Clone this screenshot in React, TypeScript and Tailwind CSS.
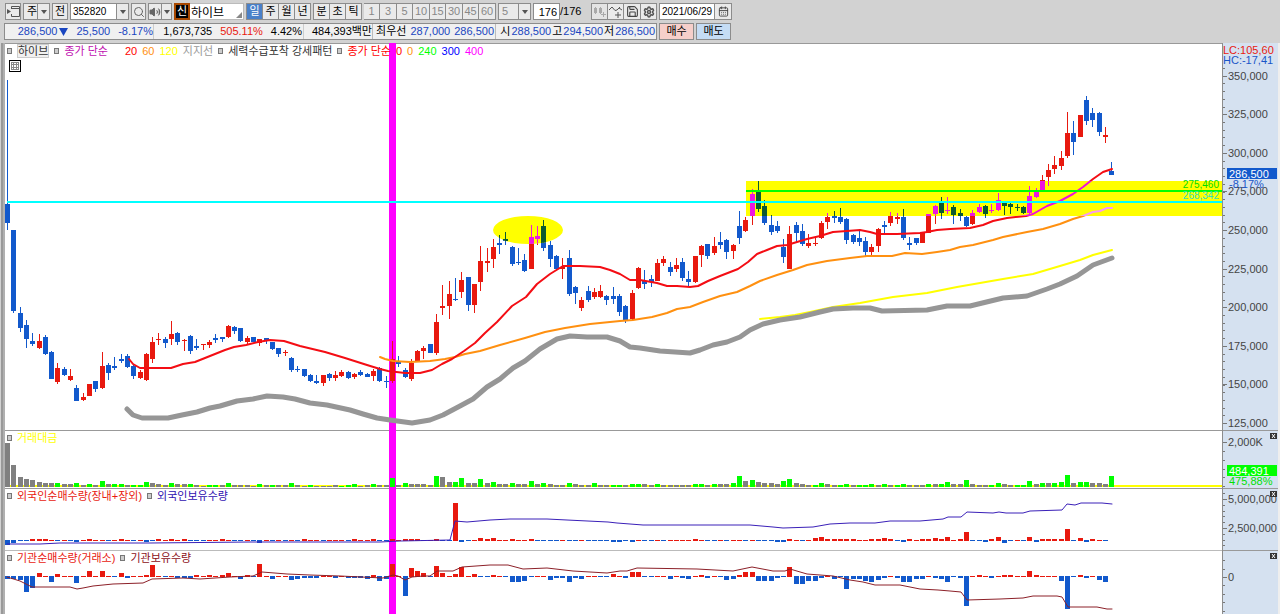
import React from 'react';
import { Search, Settings, Save, CalendarDays, Volume2 } from 'lucide-react';

const FIRST_X = 7.5;
const STEP = 6.31;

const barX = (i: number) => Math.floor(FIRST_X + STEP * i);

// high, body top, body bottom, low, r = rising / b = falling
const CANDLES = `80 204 223 230 b|230 230 311 313 b|307 313 328 332 b|320 325 339 348 b|333 341 344 346 b|334 341 348 349 r
335 337 354 355 b|351 352 379 379 b|363 368 382 384 r|367 369 375 376 b|369 376 380 381 r|385 388 401 401 b
393 397 400 401 r|384 384 396 396 r|381 381 389 392 b|352 366 388 389 r|363 365 373 380 b|357 366 368 370 b
354 359 361 363 b|354 356 367 368 b|365 366 376 379 b|370 372 378 379 r|353 354 380 381 r|337 342 359 363 r
333 339 340 345 r|337 339 343 348 b|321 334 339 345 r|332 333 342 345 b|339 340 341 351 r|335 336 351 354 b
339 346 348 350 b|344 344 345 350 r|340 342 345 348 r|334 338 340 343 b|337 337 339 342 b|325 326 337 338 r
326 327 331 334 b|328 328 341 342 b|336 338 342 345 r|337 337 342 342 b|339 339 343 346 r|338 338 341 344 b
342 342 349 350 b|348 348 354 357 b|350 352 353 356 r|357 358 370 372 b|366 369 370 372 b|369 369 376 377 b
374 375 381 382 b|375 381 383 384 b|375 375 383 386 r|373 374 378 381 b|371 375 378 381 r|370 372 376 377 r
371 372 378 379 b|373 374 377 379 r|370 372 375 376 b|373 374 377 377 b|369 371 376 381 r|367 368 381 382 b
376 381 382 388 b|341 359 381 383 r|356 362 364 367 b|368 370 377 378 b|359 363 379 381 r|350 351 361 362 r
346 348 351 359 r|344 344 353 353 b|314 322 353 355 r|285 306 308 315 r|281 294 306 319 r|278 299 300 301 b
272 280 292 298 r|277 277 305 311 b|284 284 305 313 r|246 261 282 291 r|248 261 263 272 r|239 247 259 268 r
235 243 245 254 b|232 239 241 245 b|246 247 264 266 b|248 262 263 265 b|254 260 271 272 b|225 237 269 269 r
226 236 239 245 r|220 226 248 251 b|241 245 259 267 b|255 256 269 270 b|258 267 269 279 r|250 258 294 296 b
286 287 293 304 b|297 300 308 311 r|286 291 300 302 b|288 292 297 299 r|285 291 297 298 r|295 296 300 305 b
287 296 299 304 b|294 296 312 316 b|305 306 321 323 b|290 293 319 321 r|267 268 288 289 r|270 281 284 289 b
275 279 282 287 b|259 263 281 281 r|256 259 263 266 r|262 267 272 276 b|258 265 269 272 r|258 262 278 281 b
271 279 282 287 b|256 256 282 283 r|245 246 255 267 r|244 244 256 259 b|237 246 253 255 r|232 242 245 249 b
239 240 252 259 b|244 245 251 259 r|211 226 238 244 b|217 220 231 232 r|189 194 216 225 r|181 192 209 212 b
200 206 223 225 b|215 225 232 235 b|221 226 231 233 b|239 247 257 263 b|226 234 269 269 r|222 225 233 242 b
224 231 244 246 b|234 243 246 248 r|236 243 244 246 r|221 223 238 239 r|213 217 222 229 r|211 216 218 223 b
208 217 222 224 b|218 219 240 244 b|234 235 242 244 b|230 238 242 246 b|237 241 252 256 b|244 247 252 255 r
228 229 246 252 r|221 225 227 233 b|212 216 223 226 r|213 217 219 224 r|209 217 238 240 b|237 243 245 250 b
238 238 243 245 b|233 233 243 243 r|214 214 233 233 r|205 206 214 224 r|197 203 213 219 b|197 210 211 214 r
205 207 215 224 b|209 213 216 221 b|216 217 226 227 b|210 213 224 225 r|204 207 212 213 r|205 206 214 218 b
204 210 211 213 r|193 200 210 211 r|203 203 206 215 b|203 204 207 214 b|204 207 208 211 b|206 207 213 214 b
186 196 213 215 r|188 191 197 198 r|175 180 191 191 r|164 170 177 186 r|156 165 169 174 r|151 158 166 170 r
112 133 156 158 r|121 133 142 155 b|115 115 137 137 r|96 100 121 125 b|108 113 120 127 b|112 113 132 136 b
127 135 137 143 r|162 171 175 175 b`
  .split(/[|\n]/)
  .map(row => {
    const [high, top, bottom, low, dir] = row.trim().split(' ');
    return { high: +high, top: +top, bottom: +bottom, low: +low, up: dir === 'r' };
  });

const MA20 =
  '129,359 133,364 140,368 171,368 183,364 195,362 205,358 215,354 225,350 234,347 246,345 258,342 270,340 284,341 300,346 325,352 345,358 367,365 380,369 388,371 405,373 420,373 432,370 442,364 452,359 464,351 475,343 485,333 497,322 512,306 526,297 537,284 550,274 563,266 580,266 600,267 610,270 620,274 630,280 640,280 657,283 667,286 677,286 690,287 698,286 708,281 720,276 738,269 748,262 757,254 767,250 777,246 787,245 797,242 807,239 820,236 833,232 847,231 860,230 870,232 877,234 897,234 920,233 927,232 937,230 950,229 970,228 983,225 993,221 1007,218 1026,216 1033,214 1047,206 1060,201 1073,194 1083,187 1093,179 1103,172 1112,169';
const MA60 =
  '380,357 385,359 393,361 410,362 430,361 445,359 455,357 465,354 480,351 500,345 525,338 545,332 565,328 590,324 620,321 633,320 652,317 667,313 677,309 690,307 703,302 720,296 737,292 750,286 760,281 777,275 793,270 807,265 827,261 850,258 867,256 892,256 905,253 922,254 937,252 950,250 960,247 973,245 993,240 1003,237 1027,232 1043,229 1060,224 1073,219 1083,216 1093,212 1100,211 1107,208 1112,208';
const MA120 =
  '760,319 780,317 795,315 810,312 833,307 860,303 893,297 927,293 957,287 1003,279 1033,274 1060,266 1080,260 1093,255 1112,250';
const SUPPORT =
  '127,409 133,415 142,418 168,418 182,415 197,412 210,408 220,406 237,401 253,399 267,396 283,397 295,399 310,403 327,405 350,410 363,414 377,418 390,420 412,423 430,420 443,415 460,406 473,399 487,387 500,379 513,368 525,361 540,349 557,339 570,336 587,337 607,337 620,341 630,347 640,348 660,351 690,353 700,350 713,345 727,342 740,337 750,330 763,324 780,320 800,317 820,312 833,309 853,308 870,308 882,311 927,310 947,306 970,306 1003,298 1027,296 1047,289 1060,284 1077,276 1093,265 1112,258';
const FOREIGN_HOLD =
  '7,544 40,544 60,543 150,543 250,542 380,542 400,541 450,540 455,521 467,522 490,520 510,519 547,519 567,520 608,522 617,523 643,525 750,525 773,527 783,528 813,527 830,524 850,523 875,523 890,521 920,521 943,519 948,517 961,517 967,512 993,513 999,512 1006,513 1023,513 1030,511 1062,510 1067,504 1075,505 1081,503 1102,503 1112,504';
const INST_HOLD =
  '7,577 20,581 32,587 70,587 77,589 83,588 93,586 113,584 143,583 152,579 183,578 200,579 230,577 253,576 262,572 287,574 310,575 340,576 383,578 393,575 398,576 405,580 412,577 423,576 430,576 437,571 453,571 462,567 490,565 508,565 523,569 547,568 573,571 607,573 620,571 627,571 637,568 697,569 733,571 752,567 773,571 785,571 790,569 807,574 833,576 850,580 863,582 875,585 900,585 920,589 938,590 950,591 961,592 967,600 1000,599 1023,598 1033,596 1057,596 1062,597 1068,607 1097,607 1107,609 1112,609';

// trailing g = bar drawn green
const VOLUME =
  '44 22 10 8 7 5 4 4 4g 3 3 4g 2 3g 2 6g 3 3g 3g 2 2g 2g 5g 4 3 2 4g 3 3 3g 2 1 2g 2g 2 4g 2 2 2 1 3g 2 2g 2 2 4g 2 1 2g 1 1 1 2 1g 2g 3g 1 2 3g 2 2 9g 2 4g 3 3 3 2 11g 10 5 5g 9g 4 4 8g 4 5g 3 3 4g 3 3 6g 3 4g 3 2 2 4g 3 2 2 4g 2 2 2g 2g 2 3g 3g 3 2 3g 2 2 2 2 2 3g 3g 2 3g 3 3 4g 11g 6 7g 5 4 4 3 6g 8g 4 3 2 2g 4g 3 2 2g 3g 2 2g 2g 3g 2 3g 2 2g 3g 2 2 2 3g 3 3g 5g 3 3 7g 3 2 2 2g 4g 3 2 2g 2g 6g 3 4g 4 4g 5g 12g 4 5g 5g 4 4 3 11g'.split(
    ' '
  );

const FOREIGN =
  '-5 -3 -1 -1 2 2 2 1 -1 1 -1 -2 1 2 1 1 -1 1 2 1 -1 1 -2 -1 2 1 2 1 2 -1 -1 -1 1 1 2 1 -1 -1 1 -1 -3 1 -1 1 -1 1 -1 2 1 1 -1 1 1 1 -1 2 1 1 2 -1 -1 2 1 2 2 2 -1 1 2 -1 -1 38 -2 -1 1 3 2 3 1 1 2 1 1 2 -1 -1 -1 -1 1 -1 -1 1 -1 -1 -1 -1 -2 -2 -1 -2 1 -1 -1 1 -1 1 1 1 1 2 1 -1 -1 1 -1 1 1 -1 1 -1 -1 -1 -2 -2 2 1 -1 1 3 4 2 2 2 2 2 1 1 2 2 3 2 -1 -2 2 1 2 2 3 2 4 1 2 9 -1 -1 -2 2 4 -3 -1 1 -1 4 -2 2 2 2 2 12 -1 3 -2 2 1 -1 0'
    .split(' ')
    .map(Number);

const INSTITUTION =
  '-3 -3 -4 -16 -12 4 1 -6 3 1 1 -7 1 6 1 6 1 -1 4 -2 1 1 2 12 1 -1 1 -2 -2 -2 2 1 2 1 2 4 1 -3 2 -1 13 1 -3 1 1 -4 -3 -2 -2 -2 1 1 -2 1 -2 -2 -2 -3 2 -5 -3 13 1 -20 9 6 4 -1 11 4 1 3 10 1 3 -1 -1 2 1 -1 -6 -6 -5 -1 1 1 -4 -2 -2 -6 -2 -3 1 1 -1 -1 3 1 -2 5 5 -1 -1 1 1 -3 1 -2 -3 1 2 -2 1 -1 -4 -3 2 5 5 -5 -5 -5 -2 -1 10 -8 -8 -5 -5 -2 1 -3 -1 -13 -3 -3 -5 -6 -4 -2 1 -2 -6 -6 -3 -3 1 -2 -3 -6 -1 -2 -30 1 2 1 -2 1 2 2 1 1 6 2 1 1 1 -5 -33 -1 2 -2 1 -4 -6 0'
    .split(' ')
    .map(Number);

const Candles: React.FC<{ up: string; down: string }> = ({ up, down }) => (
  <g shapeRendering="crispEdges">
    {CANDLES.map((c, i) => (
      <g key={i} fill={c.up ? up : down}>
        <rect x={barX(i)} y={c.high} width={1} height={c.low - c.high} />
        <rect x={barX(i) - 2} y={c.top} width={5} height={Math.max(c.bottom - c.top, 1)} />
      </g>
    ))}
  </g>
);

const NetBars: React.FC<{ values: number[]; zero: number }> = ({ values, zero }) => (
  <g shapeRendering="crispEdges">
    {values.map((v, i) => (
      <rect
        key={i}
        x={barX(i) - 2}
        y={v > 0 ? zero - v : zero - 1}
        width={5}
        height={v > 0 ? v : Math.abs(v)}
        fill={v > 0 ? '#e8190f' : '#1259cc'}
      />
    ))}
  </g>
);

const Line: React.FC<{ points: string; color: string; width?: number }> = ({ points, color, width = 2 }) => (
  <polyline points={points} fill="none" stroke={color} strokeWidth={width} strokeLinejoin="round" strokeLinecap="round" />
);

const Cursor: React.FC<{ y: number; height: number }> = ({ y, height }) => (
  <rect x={389} y={y} width={7} height={height} fill="#ff00ff" />
);

const Marker = () => <span className="h-[6px] w-[5px] shrink-0 border border-[#777] bg-[#ccc]" />;

const Caret = () => (
  <svg className="h-[4px] w-[6px]" viewBox="0 0 6 4">
    <path d="M0 0h6L3 4z" fill="#555" />
  </svg>
);

const buttonBase = 'flex h-[17px] shrink-0 items-center justify-center border border-[#8c8c8c]';

const ToolButton: React.FC<{ label: string; className?: string; children?: React.ReactNode }> = ({ label, className, children }) => (
  <button type="button" aria-label={label} className={`${buttonBase} ${className ?? 'w-4 bg-[#eaeaea]'}`}>
    {children ?? label}
  </button>
);

const Picker: React.FC<{ label: string; value: string; className: string }> = ({ label, value, className }) => (
  <div className={`relative flex h-[17px] shrink-0 items-center border border-[#8c8c8c] bg-[#eaeaea] ${className}`}>
    <select aria-label={label} defaultValue={value} className="h-full w-full appearance-none pl-[3px] leading-[15px]">
      <option value={value}>{value}</option>
    </select>
    <span className="pointer-events-none absolute inset-y-0 right-0 flex w-3 items-center justify-center border-l border-[#8c8c8c]">
      <Caret />
    </span>
  </div>
);

const Axis: React.FC<{ y: number; height: number; className: string; labels: [number, string][]; ticks: number[]; closable?: boolean; children?: React.ReactNode }> = ({
  y,
  height,
  className,
  labels,
  ticks,
  closable,
  children,
}) => (
  <div className={`relative w-[56px] shrink-0 overflow-hidden border-l border-[#8c8c8c] bg-[#d5e1f0] ${className}`}>
    <svg className="block h-full w-[56px]" viewBox={`1222 ${y} 56 ${height}`}>
      <g fill="#777" shapeRendering="crispEdges">
        {ticks.map(t => (
          <rect key={t} x={1222} y={Math.round(t)} width={2} height={1} />
        ))}
        {labels.map(([ty]) => (
          <rect key={ty} x={1222} y={ty} width={4} height={1} />
        ))}
      </g>
      {labels.map(([ty, text]) => (
        <text key={ty} x={1227} y={ty + 4} className="text-[11px]" fill="#444">
          {text}
        </text>
      ))}
      {children}
      {y > 43 && <rect x={1222} y={y} width={56} height={1} fill="#999" />}
    </svg>
    {closable && (
      <button type="button" aria-label="닫기" className="absolute top-[3px] right-[1px] flex h-[6px] w-[7px] items-center justify-center bg-[#333]">
        <svg className="h-[4px] w-[5px]" viewBox="0 0 5 4">
          <path d="M1 0L4 4M4 0L1 4" stroke="#fff" />
        </svg>
      </button>
    )}
  </div>
);

const priceLabels: [number, string][] = [350, 325, 300, 275, 250, 225, 200, 175, 150, 125].map((p, i) => [
  Math.round(75.5 + i * 38.6),
  `${p},000`,
]);
const priceTicks = Array.from({ length: 46 }, (_, i) => 68 + i * 7.72);

const PERIODS = ['일', '주', '월', '년'];
const INTRADAY = ['분', '초', '틱'];
const MINUTES = ['1', '3', '5', '10', '15', '30', '45', '60'];

const Toolbar = () => (
  <div className="flex h-[17px] items-center gap-[2px] whitespace-nowrap pl-[5px]">
    <ToolButton label="화면">
      <svg className="h-[11px] w-[13px]" viewBox="0 0 13 11" fill="none" stroke="#555">
        <path d="M4.500 3V.5h8v10h-8V8M4 2.500h8" />
        <path d="M0 3l4 2.500L0 8z" fill="#555" stroke="none" />
      </svg>
    </ToolButton>
    <Picker label="종목구분" value="주" className="w-[27px]" />
    <ToolButton label="전" />
    <div className="flex">
      <input aria-label="종목코드" defaultValue="352820" className="h-[17px] w-[47px] border border-[#8c8c8c] bg-white px-[2px] text-[10px]" />
      <ToolButton label="종목코드 목록" className="w-3 border-l-0 bg-[#eaeaea]">
        <Caret />
      </ToolButton>
    </div>
    <ToolButton label="검색" className="w-[15px] bg-[#eaeaea]">
      <Search size={12} color="#666" />
    </ToolButton>
    <div className="flex">
      <ToolButton label="소리" className="w-[14px] bg-[#eaeaea]">
        <Volume2 size={12} color="#666" fill="#666" />
      </ToolButton>
      <ToolButton label="소리 설정" className="w-[10px] border-l-0 bg-[#eaeaea]">
        <Caret />
      </ToolButton>
    </div>
    <div className="flex">
      <span className="flex h-[17px] w-4 items-center justify-center border-2 border-[#a84800] bg-black text-white">신</span>
      <div className="relative">
        <input aria-label="종목명" defaultValue="하이브" className="h-[17px] w-[54px] border border-l-0 border-[#bbb] bg-white pl-px text-[12px]" />
        <svg className="pointer-events-none absolute right-[2px] bottom-[2px] h-[6px] w-[6px]" viewBox="0 0 6 6">
          <path d="M6 0v6H0z" fill="#888" />
        </svg>
      </div>
    </div>
    <div className="flex">
      {PERIODS.map((p, i) => (
        <ToolButton key={p} label={p} className={i === 0 ? 'w-[17px] bg-[#4a80c8] text-white' : 'w-4 border-l-0 bg-[#eaeaea]'} />
      ))}
    </div>
    <div className="flex">
      {INTRADAY.map((p, i) => (
        <ToolButton key={p} label={p} className={i === 0 ? 'w-[17px] bg-[#eaeaea]' : 'w-4 border-l-0 bg-[#eaeaea]'} />
      ))}
    </div>
    <div className="flex text-[#888]">
      {MINUTES.map((m, i) => (
        <ToolButton key={m} label={m} className={i % 2 ? 'w-[17px] border-l-0 bg-[#eaeaea]' : 'w-4 border-l-0 bg-[#eaeaea]'} />
      ))}
    </div>
    <div className="text-[#888]">
      <Picker label="분 간격" value="5" className="w-[33px]" />
    </div>
    <div className="flex items-center">
      <input aria-label="표시 봉수" defaultValue="176" className="h-[17px] w-[27px] border border-[#8c8c8c] bg-white pr-[2px] text-right" />
      <span className="w-[29px]">/176</span>
    </div>
    <div className="flex">
      <ToolButton label="봉 유형" className="w-[17px] bg-[#e4e4e4]">
        <svg className="h-[12px] w-[13px]" viewBox="0 0 13 12" fill="#aaa">
          <path d="M1 2h3v5H1zM2 1h1v7H2zM6 2h3v5H6zM7 1h1v7H7zM10 6h1v5h-1zM8 8h5v1H8z" />
        </svg>
      </ToolButton>
      <ToolButton label="지표 추가" className="w-4 border-l-0 bg-[#eaeaea]">
        <svg className="h-[12px] w-[13px]" viewBox="0 0 13 12" fill="none" stroke="#555">
          <path d="M0 4l3-3 3 3.500L8 4l3-3M6 9h6M9 6v6M10 2l3 2" />
        </svg>
      </ToolButton>
      <ToolButton label="저장" className="w-[17px] border-l-0 bg-[#eaeaea]">
        <Save size={13} color="#444" />
      </ToolButton>
      <ToolButton label="설정" className="w-4 border-l-0 bg-[#eaeaea]">
        <Settings size={12} color="#555" strokeWidth={3} />
      </ToolButton>
    </div>
    <div className="flex">
      <input aria-label="조회일" defaultValue="2021/06/29" className="h-[17px] w-14 border border-[#8c8c8c] bg-white pl-[2px] text-[10px]" />
      <ToolButton label="달력" className="w-[17px] border-l-0 bg-[#eaeaea]">
        <CalendarDays size={11} color="#444" />
      </ToolButton>
    </div>
  </div>
);

const QuoteBar = () => (
  <div className="flex h-[17px] items-center gap-[2px] whitespace-nowrap pl-1">
    <div className="flex h-full items-center border border-[#8c8c8c] bg-[#f0f0f0] text-[#1a46c0]">
      <div className="flex h-full w-[149px] items-center justify-end gap-2 border-r border-[#ccc]">
        <span className="flex items-center gap-[2px]">
          286,500
          <svg className="h-[8px] w-[9px]" viewBox="0 0 9 8">
            <path d="M0 0h9L4.500 8z" fill="#1a46c0" />
          </svg>
        </span>
        <span>25,500</span>
        <span>-8.17%</span>
      </div>
      <div className="flex h-full w-[150px] items-center justify-end gap-2 border-r border-[#ccc] pr-px text-black">
        <span>1,673,735</span>
        <span className="text-[#e8190f]">505.11%</span>
        <span>4.42%</span>
      </div>
      <div className="flex h-full w-[69px] items-center justify-end border-r border-[#bbb] text-black">484,393백만</div>
      <div className="flex h-full w-[123px] items-center justify-end gap-1 border-r border-[#bbb] pr-px">
        <span className="text-black">최우선</span>
        <span>287,000</span>
        <span>286,500</span>
      </div>
      <div className="flex h-full w-[160px] items-center justify-end gap-px pr-px">
        <span className="text-black">시</span>
        <span>288,500</span>
        <span className="text-black">고</span>
        <span>294,500</span>
        <span className="text-black">저</span>
        <span>286,500</span>
      </div>
    </div>
    <ToolButton label="매수" className="w-[35px] bg-[#f6cfca]" />
    <ToolButton label="매도" className="w-[35px] bg-[#c5dcf4]" />
  </div>
);

const PricePanel = () => (
  <section className="flex">
    <div className="relative min-w-0 flex-1">
      <svg className="block h-[387px] w-full" viewBox="5 43 1217 387" preserveAspectRatio="none">
        <defs>
          <clipPath id="marked">
            <rect x={746} y={181} width={476} height={35} />
            <ellipse cx={528} cy={230} rx={35} ry={14} />
          </clipPath>
        </defs>
        <rect x={5} y={43} width={1217} height={1} fill="#999" />
        <Cursor y={43} height={387} />
        <Candles up="#e8190f" down="#1259cc" />
        <Line points={MA60} color="#ff9010" />
        <Line points={MA20} color="#f40d14" />
        <Line points={MA120} color="#ffff00" />
        <Line points={SUPPORT} color="#969696" width={5} />
        <g clipPath="url(#marked)">
          <rect x={490} y={180} width={732} height={70} fill="#ffff00" />
          <Candles up="#ed17e0" down="#0c5a30" />
          <Line points={MA60} color="#f99af0" />
          <Line points={MA20} color="#f010d8" />
        </g>
        <rect x={746} y={190} width={476} height={2} fill="#00ff00" />
        <rect x={7} y={201} width={1215} height={2} fill="#00ffff" />
      </svg>
      <div className="absolute top-[2px] left-[2px] flex h-3 items-center gap-[5px] whitespace-nowrap text-[#333]">
        <Marker />
        <span className="border border-[#ccc] bg-[#f0f0f0] leading-[12px]">하이브</span>
        <Marker />
        <span className="mr-3 text-[#c010b0]">종가 단순</span>
        <span className="text-[#f00]">20</span>
        <span className="text-[#ff9010]">60</span>
        <span className="text-[#ff0]">120</span>
        <span className="text-[#999]">지지선</span>
        <Marker />
        <span>세력수급포착 강세패턴</span>
        <Marker />
        <span className="text-[#f00]">종가 단순</span>
        <span className="text-[#f00]">0</span>
        <span className="text-[#ff9010]">0</span>
        <span className="text-[#0f0]">240</span>
        <span className="text-[#00f]">300</span>
        <span className="text-[#f0f]">400</span>
      </div>
      <button type="button" aria-label="데이터 표" className="absolute top-[17px] left-1 h-3 w-3">
        <svg className="block h-3 w-3" viewBox="0 0 12 12" fill="none" shapeRendering="crispEdges">
          <rect x={0.5} y={0.5} width={11} height={11} fill="#fff" stroke="#000" />
          <path d="M4.500 2v8M7.500 2v8M2 4.500h8M2 7.500h8M2.500 2v8M9.500 2v8M2 2.500h8M2 9.500h8" stroke="#888" />
        </svg>
      </button>
      <div className="absolute top-[136px] right-[3px] text-right text-[10px] leading-[11px]">
        <div className="text-[#0d0]">275,460</div>
        <div className="text-[#2fe0c0]">268,342</div>
      </div>
    </div>
    <Axis y={43} height={387} className="h-[387px]" labels={priceLabels} ticks={priceTicks}>
      <g className="text-[11px]">
        <text x={1222} y={54} fill="#e8190f">LC:105,60</text>
        <text x={1222} y={64} fill="#1a56c8">HC:-17,41</text>
        <rect x={1226} y={168} width={50} height={11} fill="#1259cc" />
        <text x={1228} y={178} fill="#fff">286,500</text>
        <text x={1228} y={188} fill="#1a56c8">-8.17%</text>
      </g>
    </Axis>
  </section>
);

const VolumePanel = () => (
  <section className="flex">
    <div className="relative min-w-0 flex-1">
      <svg className="block h-[58px] w-full" viewBox="5 430 1217 58" preserveAspectRatio="none">
        <rect x={5} y={430} width={1217} height={1} fill="#999" />
        <rect x={5} y={485} width={1217} height={2} fill="#ffff00" />
        <Cursor y={430} height={58} />
        <g shapeRendering="crispEdges">
          {VOLUME.map((v, i) => (
            <rect key={i} x={barX(i) - 2} y={487 - parseInt(v)} width={5} height={parseInt(v)} fill={v.endsWith('g') ? '#00ff00' : '#808080'} />
          ))}
        </g>
      </svg>
      <div className="absolute top-[2px] left-[2px] flex h-3 items-center gap-[5px] text-[#ff0]">
        <Marker />
        거래대금
      </div>
    </div>
    <Axis y={430} height={58} className="h-[58px]" labels={[[442, '2,000K']]} ticks={[451, 460, 469, 477, 486]} closable>
      <g className="text-[11px]">
        <rect x={1226} y={465} width={50} height={11} fill="#00ff00" />
        <text x={1228} y={475} fill="#fff">484,391</text>
        <text x={1228} y={485} fill="#00e000">475,88%</text>
      </g>
    </Axis>
  </section>
);

const ForeignPanel = () => (
  <section className="flex">
    <div className="relative min-w-0 flex-1">
      <svg className="block h-[62px] w-full" viewBox="5 488 1217 62" preserveAspectRatio="none">
        <rect x={5} y={488} width={1217} height={1} fill="#999" />
        <Cursor y={488} height={62} />
        <NetBars values={FOREIGN} zero={541} />
        <Line points={FOREIGN_HOLD} color="#3a20b8" width={1} />
      </svg>
      <div className="absolute top-[2px] left-[2px] flex h-3 items-center gap-[5px] whitespace-nowrap">
        <Marker />
        <span className="text-[#e8190f]">외국인순매수량(장내+장외)</span>
        <Marker />
        <span className="text-[#3010b0]">외국인보유수량</span>
      </div>
    </div>
    <Axis y={488} height={62} className="h-[62px]" labels={[[499, '5,000,000'], [528, '2,500,000']]} ticks={[493, 505, 511, 516, 522, 534, 540, 545]} closable />
  </section>
);

const InstitutionPanel = () => (
  <section className="flex">
    <div className="relative min-w-0 flex-1">
      <svg className="block h-16 w-full" viewBox="5 550 1217 64" preserveAspectRatio="none">
        <rect x={5} y={549} width={1217} height={2} fill="#bbb" />
        <Cursor y={550} height={64} />
        <NetBars values={INSTITUTION} zero={577} />
        <Line points={INST_HOLD} color="#8c2028" width={1} />
      </svg>
      <div className="absolute top-[2px] left-[2px] flex h-3 items-center gap-[5px] whitespace-nowrap">
        <Marker />
        <span className="text-[#e8190f]">기관순매수량(거래소)</span>
        <Marker />
        <span className="text-[#8c1020]">기관보유수량</span>
      </div>
    </div>
    <Axis y={550} height={64} className="h-16" labels={[[577, '0']]} ticks={[560, 569, 585, 594, 602, 611]} closable />
  </section>
);

export default function App() {
  return (
    <div className="min-h-screen bg-[#d2d2d2] font-['Liberation_Sans','Noto_Sans_CJK_KR',sans-serif] text-[11px] leading-[13px] text-black">
      <header className="flex flex-col gap-[3px] pt-[3px] pb-[3px]">
        <Toolbar />
        <QuoteBar />
      </header>
      <main className="ml-px border-r-2 border-l-2 border-r-[#eee] border-l-[#999]">
        <div className="border-l-2 border-[#b0b0b0] bg-white">
          <PricePanel />
          <VolumePanel />
          <ForeignPanel />
          <InstitutionPanel />
        </div>
      </main>
    </div>
  );
}
